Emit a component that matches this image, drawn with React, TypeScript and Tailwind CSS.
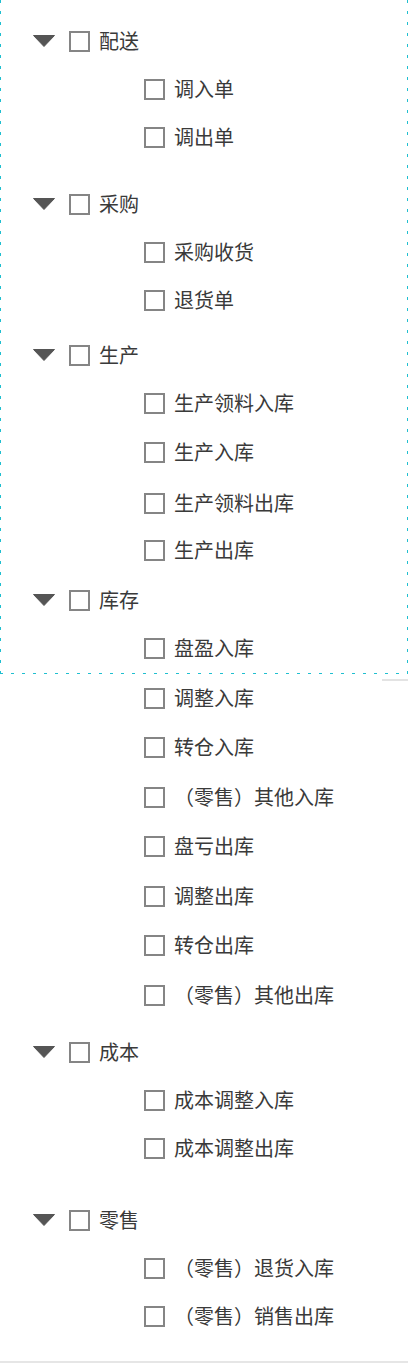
import React from 'react';

type Row = { label: string; parent?: boolean; gap: string };

const rows: Row[] = [
  { label: '配送', parent: true, gap: '' },
  { label: '调入单', gap: '' },
  { label: '调出单', gap: '' },
  { label: '采购', parent: true, gap: 'mt-[19px]' },
  { label: '采购收货', gap: '' },
  { label: '退货单', gap: '' },
  { label: '生产', parent: true, gap: 'mt-[7px]' },
  { label: '生产领料入库', gap: '' },
  { label: '生产入库', gap: 'mt-px' },
  { label: '生产领料出库', gap: 'mt-[3px]' },
  { label: '生产出库', gap: '-mt-px' },
  { label: '库存', parent: true, gap: 'mt-[2px]' },
  { label: '盘盈入库', gap: '' },
  { label: '调整入库', gap: 'mt-[2px]' },
  { label: '转仓入库', gap: 'mt-px' },
  { label: '（零售）其他入库', gap: 'mt-[2px]' },
  { label: '盘亏出库', gap: 'mt-px' },
  { label: '调整出库', gap: 'mt-[2px]' },
  { label: '转仓出库', gap: 'mt-px' },
  { label: '（零售）其他出库', gap: 'mt-[2px]' },
  { label: '成本', parent: true, gap: 'mt-[9px]' },
  { label: '成本调整入库', gap: '' },
  { label: '成本调整出库', gap: '' },
  { label: '零售', parent: true, gap: 'mt-[24px]' },
  { label: '（零售）退货入库', gap: '' },
  { label: '（零售）销售出库', gap: '' },
];

function Caret() {
  return (
    <svg width="22" height="12" viewBox="0 0 22 12" className="shrink-0">
      <path d="M0.5 0.5 H21.5 L11 11.5 Z" fill="#555" stroke="#555" strokeWidth="1" strokeLinejoin="round" />
    </svg>
  );
}

function Box() {
  return <span className="block w-[21px] h-[21px] shrink-0 border-2 border-[#858585] bg-white" />;
}

export default function App() {
  return (
    <div className="relative w-[408px] h-[1363px] bg-white font-['Noto_Sans_CJK_SC',sans-serif] text-[#3a3a3a] border-b-2 border-[#e6e6e6]">
      <div className="pt-[17px]">
        {rows.map((r) => (
          <div
            key={r.label}
            className={`flex items-center h-[48px] ${r.parent ? 'pl-[33px]' : 'pl-[144px]'} ${r.gap}`}
          >
            {r.parent && (
              <span className="mr-[14px] flex">
                <Caret />
              </span>
            )}
            <Box />
            <span className="ml-[9px] text-[20px] leading-none whitespace-nowrap">{r.label}</span>
          </div>
        ))}
      </div>

      {/* selection frame */}
      <div className="absolute left-0 top-0 w-[408px] h-[674px] pointer-events-none">
        <div className="absolute left-0 top-0 w-px h-full bg-[linear-gradient(to_bottom,#1fbfd0_3px,transparent_3px)] bg-[length:1px_11px]" />
        <div className="absolute right-0 top-0 w-px h-full bg-[linear-gradient(to_bottom,#1fbfd0_3px,transparent_3px)] bg-[length:1px_11px]" />
        <div className="absolute left-0 bottom-0 h-px w-full bg-[linear-gradient(to_right,#1fbfd0_3px,transparent_3px)] bg-[length:11px_1px]" />
      </div>
      <div className="absolute right-0 top-[679px] w-[26px] h-[2px] bg-[#e3e3e3]" />
    </div>
  );
}
